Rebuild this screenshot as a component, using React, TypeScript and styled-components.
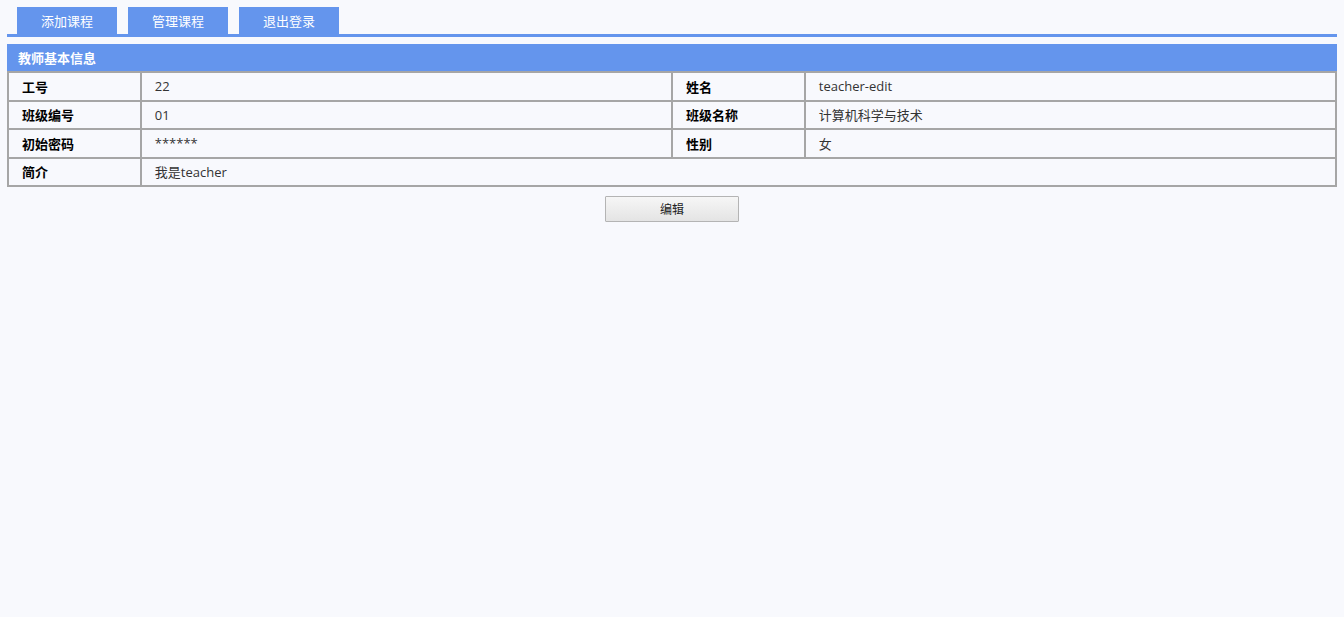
import React from 'react';
import styled, { createGlobalStyle } from 'styled-components';

const GlobalStyle = createGlobalStyle`
    html, body {
        margin: 0;
        padding: 0;
        background: #f8f9fd;
        font-family: "Open Sans", "Noto Sans CJK SC", sans-serif;
    }
`;

const Page = styled.div`
    padding: 7px 7px 0 7px;
`;

const TabBar = styled.div`
    display: flex;
    gap: 11px;
    padding-left: 10px;
    border-bottom: 3px solid #6495ed;
`;

const Tab = styled.div`
    width: 100px;
    height: 27px;
    background: #6495ed;
    color: #fff;
    font-size: 13px;
    display: flex;
    align-items: center;
    justify-content: center;
    cursor: pointer;
`;

const Panel = styled.div`
    margin-top: 7px;
`;

const PanelTitle = styled.div`
    height: 27px;
    background: #6495ed;
    color: #fff;
    font-size: 13px;
    font-weight: bold;
    display: flex;
    align-items: center;
    padding-left: 11px;
`;

const InfoTable = styled.table`
    width: 100%;
    border-collapse: collapse;
    table-layout: fixed;
    border: 2px solid #a6a6a6;
    border-top: none;
`;

const Cell = styled.td<{ $label?: boolean }>`
    height: 26.5px;
    padding: 0 13px;
    border: 2px solid #a6a6a6;
    font-size: 13px;
    font-weight: ${p => (p.$label ? 'bold' : 'normal')};
    color: ${p => (p.$label ? '#000' : '#333')};
`;

const Actions = styled.div`
    display: flex;
    justify-content: center;
    padding-top: 9px;
`;

const EditButton = styled.button`
    width: 134px;
    height: 26px;
    border: 1px solid #b4b4b4;
    border-radius: 1px;
    background: linear-gradient(#f6f6f6, #e4e4e4);
    font-family: "Open Sans", "Noto Sans CJK SC", sans-serif;
    font-size: 12px;
    color: #222;
    cursor: pointer;
`;

const tabs = ['添加课程', '管理课程', '退出登录'];

const App: React.FC = () => {
    return (
        <>
            <GlobalStyle />
            <Page>
                <TabBar>
                    {tabs.map(t => <Tab key={t}>{t}</Tab>)}
                </TabBar>
                <Panel>
                    <PanelTitle>教师基本信息</PanelTitle>
                    <InfoTable>
                        <colgroup>
                            <col style={{ width: '10%' }} />
                            <col style={{ width: '40%' }} />
                            <col style={{ width: '10%' }} />
                            <col style={{ width: '40%' }} />
                        </colgroup>
                        <tbody>
                            <tr>
                                <Cell $label>工号</Cell>
                                <Cell>22</Cell>
                                <Cell $label>姓名</Cell>
                                <Cell>teacher-edit</Cell>
                            </tr>
                            <tr>
                                <Cell $label>班级编号</Cell>
                                <Cell>01</Cell>
                                <Cell $label>班级名称</Cell>
                                <Cell>计算机科学与技术</Cell>
                            </tr>
                            <tr>
                                <Cell $label>初始密码</Cell>
                                <Cell>******</Cell>
                                <Cell $label>性别</Cell>
                                <Cell>女</Cell>
                            </tr>
                            <tr>
                                <Cell $label>简介</Cell>
                                <Cell colSpan={3}>我是teacher</Cell>
                            </tr>
                        </tbody>
                    </InfoTable>
                </Panel>
                <Actions>
                    <EditButton>编辑</EditButton>
                </Actions>
            </Page>
        </>
    );
};

export default App;
